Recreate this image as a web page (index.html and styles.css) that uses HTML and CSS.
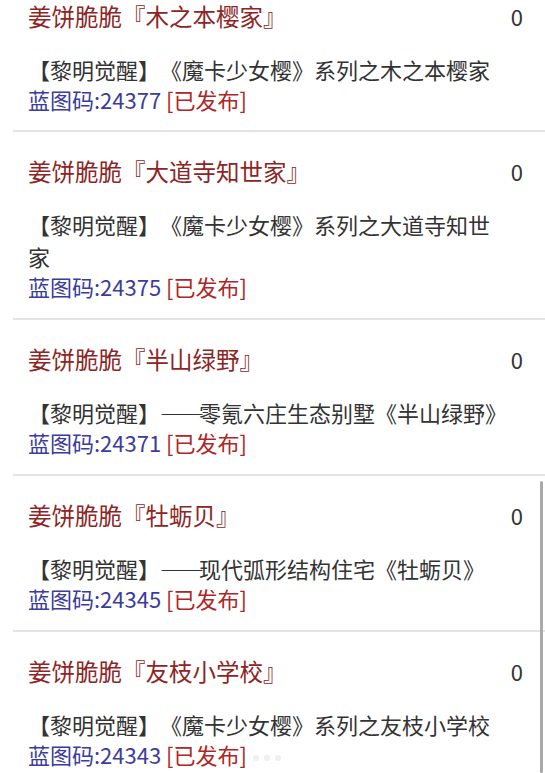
FILE: index.html
```html
<!DOCTYPE html>
<html lang="zh">
<head>
<meta charset="utf-8">
<link rel="stylesheet" href="styles.css">
</head>
<body>
<div class="list">
  <div class="item">
    <div class="head"><span class="title">姜饼脆脆『木之本樱家』</span><span class="count">0</span></div>
    <div class="desc">【黎明觉醒】《魔卡少女樱》系列之木之本樱家</div>
    <div class="meta"><span class="code">蓝图码:24377</span> <span class="status">[已发布]</span></div>
  </div>
  <div class="item">
    <div class="head"><span class="title">姜饼脆脆『大道寺知世家』</span><span class="count">0</span></div>
    <div class="desc">【黎明觉醒】《魔卡少女樱》系列之大道寺知世家</div>
    <div class="meta"><span class="code">蓝图码:24375</span> <span class="status">[已发布]</span></div>
  </div>
  <div class="item">
    <div class="head"><span class="title">姜饼脆脆『半山绿野』</span><span class="count">0</span></div>
    <div class="desc">【黎明觉醒】<span class="dash">——</span>零氪六庄生态别墅《半山绿野》</div>
    <div class="meta"><span class="code">蓝图码:24371</span> <span class="status">[已发布]</span></div>
  </div>
  <div class="item">
    <div class="head"><span class="title">姜饼脆脆『牡蛎贝』</span><span class="count">0</span></div>
    <div class="desc">【黎明觉醒】<span class="dash">——</span>现代弧形结构住宅《牡蛎贝》</div>
    <div class="meta"><span class="code">蓝图码:24345</span> <span class="status">[已发布]</span></div>
  </div>
  <div class="item">
    <div class="head"><span class="title">姜饼脆脆『友枝小学校』</span><span class="count">0</span></div>
    <div class="desc">【黎明觉醒】《魔卡少女樱》系列之友枝小学校</div>
    <div class="meta"><span class="code">蓝图码:24343</span> <span class="status">[已发布]</span><span class="dots"><i></i><i></i><i></i></span></div>
  </div>
</div>
<div class="scrollbar"></div>
</body>
</html>
```
FILE: styles.css
```css
html, body {
  margin: 0;
  padding: 0;
  background: #ffffff;
  overflow: hidden;
}
body {
  font-family: "Noto Sans CJK SC", "Noto Sans", sans-serif;
  color: #333333;
  width: 545px;
  height: 773px;
  position: relative;
  text-spacing-trim: space-all;
}
.list {
  display: flex;
  flex-direction: column;
  margin-left: 13px;
}
.item {
  border-top: 2px solid #e4e4e4;
  padding: 23px 30px 15px 15px;
}
.item:first-child {
  border-top: none;
  padding-top: 0;
  padding-bottom: 14px;
}
.head {
  display: flex;
  justify-content: space-between;
  align-items: center;
  height: 34px;
  margin-bottom: 21px;
}
.title {
  font-size: 23.5px;
  line-height: 34px;
  color: #8e2525;
  margin-top: -2px;
}
.count {
  font-size: 22px;
  line-height: 34px;
  color: #333333;
  margin-right: -8px;
  margin-top: -2px;
}
.desc {
  font-size: 22px;
  line-height: 32px;
  color: #333333;
  width: 481px;
  margin-top: -2px;
}
.dash {
  letter-spacing: -5px;
}
.meta {
  font-size: 22px;
  line-height: 31px;
  margin-top: -1px;
  margin-bottom: 1px;
}
.code {
  color: #3c3c9c;
}
.status {
  color: #b02525;
}
.dots {
  display: inline-flex;
  gap: 5px;
  margin-left: 6px;
  vertical-align: middle;
}
.dots i {
  display: block;
  width: 6px;
  height: 6px;
  border-radius: 50%;
  background: #f0f0f0;
}
.scrollbar {
  position: absolute;
  right: 2px;
  top: 481px;
  width: 3px;
  height: 292px;
  background: #a9a9a9;
  border-radius: 2px;
}
```
